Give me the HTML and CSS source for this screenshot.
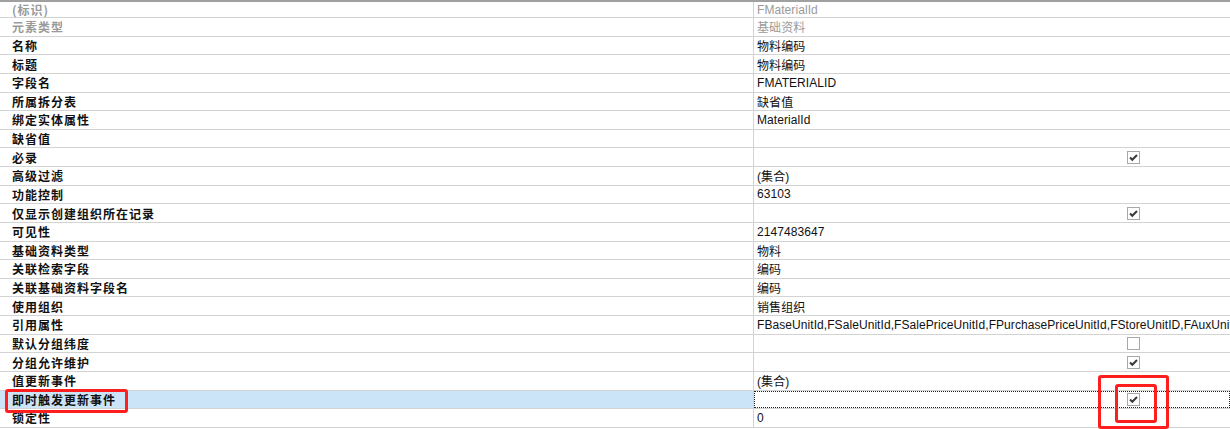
FILE: index.html
```html
<!DOCTYPE html>
<html>
<head>
<meta charset="utf-8">
<link rel="stylesheet" href="styles.css">
</head>
<body>
<div class="grid">
  <div class="row first muted"><div class="label">(标识)</div><div class="value">FMaterialId</div></div>
  <div class="row muted"><div class="label">元素类型</div><div class="value">基础资料</div></div>
  <div class="row"><div class="label">名称</div><div class="value">物料编码</div></div>
  <div class="row"><div class="label">标题</div><div class="value">物料编码</div></div>
  <div class="row"><div class="label">字段名</div><div class="value">FMATERIALID</div></div>
  <div class="row"><div class="label">所属拆分表</div><div class="value">缺省值</div></div>
  <div class="row"><div class="label">绑定实体属性</div><div class="value">MaterialId</div></div>
  <div class="row"><div class="label">缺省值</div><div class="value"></div></div>
  <div class="row"><div class="label">必录</div><div class="value"><span class="cb checked"><svg viewBox="0 0 11 11" width="11" height="11"><path d="M2 5.5 L4.3 7.8 L9 3" /></svg></span></div></div>
  <div class="row"><div class="label">高级过滤</div><div class="value">(集合)</div></div>
  <div class="row"><div class="label">功能控制</div><div class="value">63103</div></div>
  <div class="row"><div class="label">仅显示创建组织所在记录</div><div class="value"><span class="cb checked"><svg viewBox="0 0 11 11" width="11" height="11"><path d="M2 5.5 L4.3 7.8 L9 3" /></svg></span></div></div>
  <div class="row"><div class="label">可见性</div><div class="value">2147483647</div></div>
  <div class="row"><div class="label">基础资料类型</div><div class="value">物料</div></div>
  <div class="row"><div class="label">关联检索字段</div><div class="value">编码</div></div>
  <div class="row"><div class="label">关联基础资料字段名</div><div class="value">编码</div></div>
  <div class="row"><div class="label">使用组织</div><div class="value">销售组织</div></div>
  <div class="row"><div class="label">引用属性</div><div class="value">FBaseUnitId,FSaleUnitId,FSalePriceUnitId,FPurchasePriceUnitId,FStoreUnitID,FAuxUnitID</div></div>
  <div class="row"><div class="label">默认分组纬度</div><div class="value"><span class="cb"></span></div></div>
  <div class="row"><div class="label">分组允许维护</div><div class="value"><span class="cb checked"><svg viewBox="0 0 11 11" width="11" height="11"><path d="M2 5.5 L4.3 7.8 L9 3" /></svg></span></div></div>
  <div class="row"><div class="label">值更新事件</div><div class="value">(集合)</div></div>
  <div class="row selected"><div class="label">即时触发更新事件</div><div class="value focus"><span class="cb checked"><svg viewBox="0 0 11 11" width="11" height="11"><path d="M2 5.5 L4.3 7.8 L9 3" /></svg></span></div></div>
  <div class="row"><div class="label">锁定性</div><div class="value">0</div></div>

  <div class="mark mark-label"></div>
  <div class="mark mark-outer"></div>
  <div class="mark mark-inner"></div>
</div>
</body>
</html>
```

FILE: styles.css
```css
html, body {
  margin: 0;
  padding: 0;
  background: #ffffff;
}

.grid {
  position: relative;
  width: 1230px;
  height: 429px;
  overflow: hidden;
  border-top: 2px solid #a0a0a0;
  box-sizing: border-box;
}

.row {
  display: flex;
  height: 18.64px;
  border-bottom: 1px solid #d3d3d3;
  box-sizing: border-box;
}

.row.first {
  height: 16px;
}

.label {
  width: 754px;
  flex: none;
  box-sizing: border-box;
  padding-left: 12px;
  border-right: 1px solid #d3d3d3;
  font-family: "Noto Sans CJK SC", "Liberation Sans", sans-serif;
  font-weight: bold;
  font-size: 12px;
  letter-spacing: 1px;
  color: #111111;
  display: flex;
  align-items: center;
  white-space: nowrap;
}

.value {
  flex: 1;
  min-width: 0;
  box-sizing: border-box;
  padding-left: 3px;
  font-family: "Liberation Sans", "Noto Sans CJK SC", sans-serif;
  font-size: 12px;
  letter-spacing: 0.07px;
  color: #111111;
  display: flex;
  align-items: center;
  white-space: nowrap;
  overflow: hidden;
}

.muted .label,
.muted .value {
  color: #9a9a9a;
}

.selected .label {
  background: #cce4f7;
}

.value.focus {
  outline: 1px dotted #222222;
  outline-offset: -1px;
}

.cb {
  width: 13px;
  height: 13px;
  margin-left: 370px;
  box-sizing: border-box;
  border: 1px solid #a8a8a8;
  background: #ffffff;
  display: flex;
  align-items: center;
  justify-content: center;
}

.cb svg path {
  fill: none;
  stroke: #3a3a3a;
  stroke-width: 2;
}

.mark {
  position: absolute;
  border: 3px solid #ff1e1e;
  border-radius: 3px;
  box-sizing: border-box;
}

.mark-label {
  left: 5px;
  top: 387px;
  width: 123px;
  height: 24px;
}

.mark-outer {
  left: 1098px;
  top: 373px;
  width: 71px;
  height: 54px;
}

.mark-inner {
  left: 1115px;
  top: 382px;
  width: 42px;
  height: 39px;
}
```
